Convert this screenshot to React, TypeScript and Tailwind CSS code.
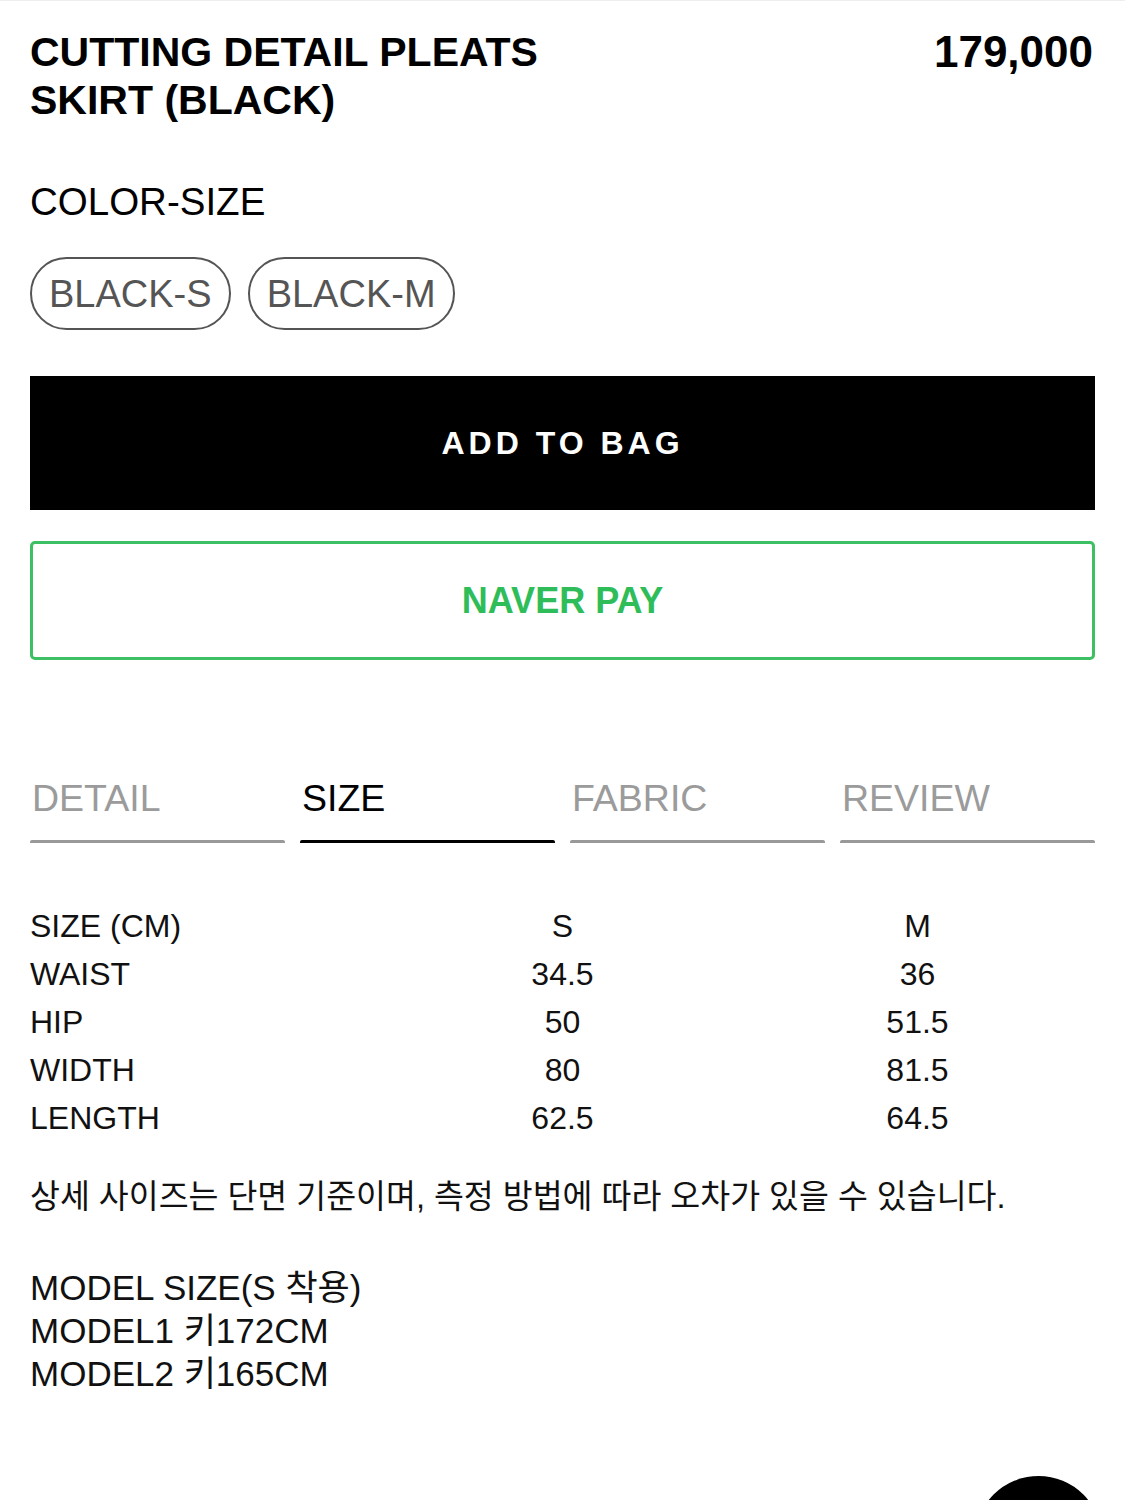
import React from "react";

const font = { fontFamily: '"Liberation Sans", "Noto Sans CJK KR", Arial, sans-serif' };

const rows: [string, string, string][] = [
  ["SIZE (CM)", "S", "M"],
  ["WAIST", "34.5", "36"],
  ["HIP", "50", "51.5"],
  ["WIDTH", "80", "81.5"],
  ["LENGTH", "62.5", "64.5"],
];

const tabs = ["DETAIL", "SIZE", "FABRIC", "REVIEW"];

export default function App() {
  return (
    <div
      className="relative h-[1500px] w-[1125px] overflow-hidden border-t border-[#eeeeee] bg-white text-black"
      style={font}
    >
      <div className="flex flex-col px-[30px] pt-[27px]">
        <div className="flex items-start justify-between">
          <h1 className="w-[580px] text-[41px] font-bold leading-[48px]">
            CUTTING DETAIL PLEATS SKIRT (BLACK)
          </h1>
          <div className="pr-[2px] text-[44px] font-bold leading-[48px]">179,000</div>
        </div>

        <div className="mt-[56px] text-[38.5px] leading-[44px]">COLOR-SIZE</div>

        <div className="mt-[33px] flex gap-[17px]">
          {["BLACK-S", "BLACK-M"].map((s) => (
            <div
              key={s}
              className="flex h-[73px] items-center rounded-full border-2 border-[#555555] px-[17px] text-[38px] leading-none text-[#555555]"
            >
              {s}
            </div>
          ))}
        </div>

        <button className="mt-[46px] flex h-[134px] w-full items-center justify-center bg-black text-[32px] font-bold tracking-[4px] text-white">
          ADD TO BAG
        </button>

        <button className="mt-[31px] flex h-[119px] w-full items-center justify-center rounded-[5px] border-[3px] border-[#3cc063] text-[36px] font-bold text-[#2ebd59]">
          NAVER PAY
        </button>

        <div className="mt-[116px] grid grid-cols-4 gap-[15px]">
          {tabs.map((t) => (
            <div key={t} className="flex flex-col">
              <div
                className={`pl-[2px] text-[37.5px] leading-[44px] ${
                  t === "SIZE" ? "text-black" : "text-[#9b9b9b]"
                }`}
              >
                {t}
              </div>
              <div
                className={`mt-[20px] h-[3px] rounded-t-[2px] ${
                  t === "SIZE" ? "bg-black" : "bg-[#999999]"
                }`}
              />
            </div>
          ))}
        </div>

        <div className="mt-[59px] flex flex-col text-[32px] text-[#111111]">
          {rows.map((r) => (
            <div key={r[0]} className="grid h-[48px] grid-cols-3 items-center leading-[48px]">
              <div>{r[0]}</div>
              <div className="text-center">{r[1]}</div>
              <div className="text-center">{r[2]}</div>
            </div>
          ))}
        </div>

        <div className="mt-[31px] text-[32.5px] leading-[48px] text-[#111111]">
          상세 사이즈는 단면 기준이며, 측정 방법에 따라 오차가 있을 수 있습니다.
        </div>

        <div className="mt-[45px] flex flex-col text-[35px] leading-[43px] text-[#111111]">
          <div>MODEL SIZE(S 착용)</div>
          <div>MODEL1 키172CM</div>
          <div>MODEL2 키165CM</div>
        </div>
      </div>

      <div className="absolute left-[975px] top-[1475px] h-[127px] w-[127px] rounded-full bg-black" />
    </div>
  );
}
